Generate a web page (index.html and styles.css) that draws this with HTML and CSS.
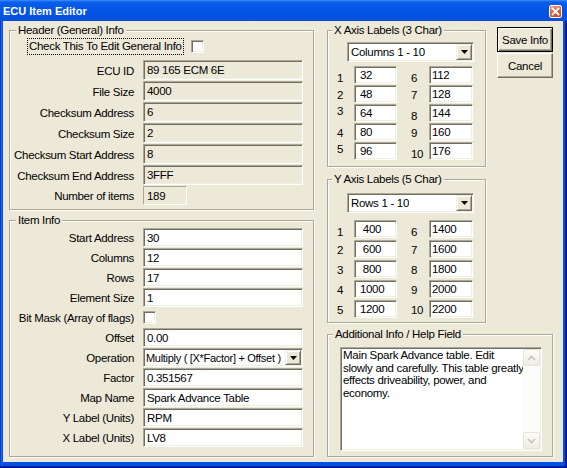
FILE: index.html
```html
<!DOCTYPE html>
<html>
<head>
<meta charset="utf-8">
<title>ECU Item Editor</title>
<link rel="stylesheet" href="styles.css">
</head>
<body>
<div class="window">
  <div class="titlebar">
    <span class="title">ECU Item Editor</span>
    <span class="close"><svg width="9" height="9" viewBox="0 0 9 9"><path d="M1.5 1.5L7.5 7.5M7.5 1.5L1.5 7.5" stroke="#fff" stroke-width="1.8" stroke-linecap="square"/></svg></span>
  </div>
  <div class="client">
    <div class="col-left">
      <fieldset class="group g-header">
        <legend>Header (General) Info</legend>
        <div class="check-row"><span class="focus">Check This To Edit General Info</span><span class="checkbox"></span></div>
        <div class="form form-header">
          <label>ECU ID</label><div class="field ro">89 165 ECM 6E</div>
          <label>File Size</label><div class="field ro">4000</div>
          <label>Checksum Address</label><div class="field ro">6</div>
          <label>Checksum Size</label><div class="field ro">2</div>
          <label>Checksum Start Address</label><div class="field ro">8</div>
          <label>Checksum End Address</label><div class="field ro">3FFF</div>
          <label>Number of items</label><div class="count">189</div>
        </div>
      </fieldset>
      <fieldset class="group g-item">
        <legend>Item Info</legend>
        <div class="form form-item">
          <label>Start Address</label><div class="field">30</div>
          <label>Columns</label><div class="field">12</div>
          <label>Rows</label><div class="field">17</div>
          <label>Element Size</label><div class="field">1</div>
          <label>Bit Mask (Array of flags)</label><div class="cb-cell"><span class="checkbox"></span></div>
          <label>Offset</label><div class="field">0.00</div>
          <label>Operation</label><div class="combo"><span class="combo-text op-text">Multiply ( [X*Factor] + Offset )</span><span class="drop"><svg width="7" height="4" viewBox="0 0 7 4"><path d="M0 0H7L3.5 4Z" fill="#000"/></svg></span></div>
          <label>Factor</label><div class="field">0.351567</div>
          <label>Map Name</label><div class="field">Spark Advance Table</div>
          <label>Y Label (Units)</label><div class="field">RPM</div>
          <label>X Label (Units)</label><div class="field">LV8</div>
        </div>
      </fieldset>
    </div>
    <div class="col-right">
      <div class="top">
        <div class="axes">
          <fieldset class="group g-x">
            <legend>X Axis Labels (3 Char)</legend>
            <div class="combo axis-combo"><span class="combo-text">Columns 1 - 10</span><span class="drop"><svg width="7" height="4" viewBox="0 0 7 4"><path d="M0 0H7L3.5 4Z" fill="#000"/></svg></span></div>
            <div class="nums nums-x">
              <span class="n e">1</span><div class="box">&nbsp;32</div><span class="n n2 e">6</span><div class="box">112</div>
              <span class="n c">2</span><div class="box">&nbsp;48</div><span class="n n2 c">7</span><div class="box">128</div>
              <span class="n s">3</span><div class="box">&nbsp;64</div><span class="n n2 e">8</span><div class="box">144</div>
              <span class="n c">4</span><div class="box">&nbsp;80</div><span class="n n2 c">9</span><div class="box">160</div>
              <span class="n s">5</span><div class="box">&nbsp;96</div><span class="n n2 e">10</span><div class="box">176</div>
            </div>
          </fieldset>
          <fieldset class="group g-y">
            <legend>Y Axis Labels (5 Char)</legend>
            <div class="combo axis-combo"><span class="combo-text">Rows 1 - 10</span><span class="drop"><svg width="7" height="4" viewBox="0 0 7 4"><path d="M0 0H7L3.5 4Z" fill="#000"/></svg></span></div>
            <div class="nums nums-y">
              <span class="n e">1</span><div class="box">&nbsp;&nbsp;400</div><span class="n n2 e">6</span><div class="box">1400</div>
              <span class="n c">2</span><div class="box">&nbsp;&nbsp;600</div><span class="n n2 c">7</span><div class="box">1600</div>
              <span class="n c">3</span><div class="box">&nbsp;&nbsp;800</div><span class="n n2 c">8</span><div class="box">1800</div>
              <span class="n c">4</span><div class="box">&nbsp;1000</div><span class="n n2 c">9</span><div class="box">2000</div>
              <span class="n c">5</span><div class="box">&nbsp;1200</div><span class="n n2 c">10</span><div class="box">2200</div>
            </div>
          </fieldset>
        </div>
        <div class="buttons">
          <div class="btn default">Save Info</div>
          <div class="btn">Cancel</div>
        </div>
      </div>
      <fieldset class="group g-add">
        <legend>Additional Info / Help Field</legend>
        <div class="memo">
          <div class="memo-text">Main Spark Advance table. Edit<br>slowly and carefully. This table greatly<br>effects driveability, power, and<br>economy.</div>
          <div class="vscroll">
            <span class="sb"><svg width="9" height="6" viewBox="0 0 9 6"><path d="M1 5L4.5 1.5L8 5" fill="none" stroke="#c4c3b8" stroke-width="1.6"/></svg></span>
            <span class="track"></span>
            <span class="sb"><svg width="9" height="6" viewBox="0 0 9 6"><path d="M1 1L4.5 4.5L8 1" fill="none" stroke="#c4c3b8" stroke-width="1.6"/></svg></span>
          </div>
        </div>
      </fieldset>
    </div>
  </div>
</div>
</body>
</html>
```
FILE: styles.css
```css
* { box-sizing: border-box; }
html, body { margin: 0; padding: 0; }
body {
  width: 567px;
  height: 468px;
  overflow: hidden;
  font-family: "Liberation Sans", Arial, sans-serif;
  font-size: 11.5px;
  letter-spacing: -0.3px;
  color: #000;
  background: #ece9d8;
}
.window {
  width: 567px;
  height: 468px;
  display: flex;
  flex-direction: column;
  background: #0550e0;
  box-shadow: inset -1px -1px #00138c, inset 1px 0 #0831d9, inset -2px -2px #001ea0, inset 2px 0 #166aee;
}
.titlebar {
  height: 21px;
  flex: none;
  display: flex;
  align-items: center;
  justify-content: space-between;
  padding: 1px 5px 0 3px;
  background: linear-gradient(180deg, #3d8ff9 0, #0a5fea 2px, #0557e6 8px, #0253e2 16px, #0a4fd8 21px);
  color: #fff;
  font-weight: bold;
  font-size: 11px;
  letter-spacing: 0;
}
.close {
  width: 13px;
  height: 13px;
  display: flex;
  align-items: center;
  justify-content: center;
  border: 1px solid #fff;
  border-radius: 2px;
  background: linear-gradient(160deg, #f0a58c 0, #e2633f 45%, #c8401f 100%);
}
.client {
  flex: 1;
  margin: 0 4px 6px 3px;
  background: #ece9d8;
  display: flex;
  gap: 13px;
  padding: 2px 10px 5px 6px;
}
.col-left {
  width: 305px;
  display: flex;
  flex-direction: column;
  gap: 3px;
}
.col-right {
  width: 226px;
  display: flex;
  flex-direction: column;
}
.top { display: flex; gap: 11px; }
.axes {
  width: 159px;
  display: flex;
  flex-direction: column;
  gap: 5px;
}
.buttons {
  width: 56px;
  display: flex;
  flex-direction: column;
  gap: 1px;
  margin-top: 4px;
}

/* group boxes */
.group {
  margin: 0;
  padding: 0;
  min-width: 0;
  border: 1px solid #aca899;
  box-shadow: inset 1px 1px 0 #fff, 1px 1px 0 #fff;
}
.group legend {
  margin-left: 6px;
  padding: 0 2px;
  line-height: 14px;
  background: #ece9d8;
}
.g-x legend, .g-y legend { margin-left: 4px; }
.g-add legend { margin-left: 5px; }
.g-header { padding-bottom: 4px; }
.g-item { flex: 1; }
.g-x { padding: 0 0 6px 0; }
.g-y { padding: 0 0 4px 0; }
.g-add { flex: 1; margin-top: 4px; }

/* header check row */
.check-row {
  display: flex;
  align-items: center;
  gap: 7px;
  margin: 1px 0 0 17px;
  height: 17px;
}
.focus {
  outline: 1px dotted #000;
  outline-offset: -1px;
  height: 17px;
  line-height: 17px;
  padding: 0 2px 0 2px;
}
.checkbox {
  display: block;
  width: 13px;
  height: 13px;
  background: #fff;
  border: 1px solid;
  border-color: #aca899 #fff #fff #aca899;
  box-shadow: inset 1px 1px #716f64, inset -1px -1px #f1efe2;
}

/* label/field forms */
.form {
  display: grid;
  grid-template-columns: 124px 160px;
  column-gap: 9px;
}
.form label {
  text-align: right;
  align-self: center;
  white-space: nowrap;
  padding-top: 1px;
}
.form-header {
  margin-top: 5px;
  row-gap: 1px;
  grid-template-rows: repeat(6, 20px) 19px;
}
.form-item {
  margin-top: 1px;
  row-gap: 1px;
  grid-auto-rows: 19px;
}
.field {
  background: #fff;
  border: 1px solid;
  border-color: #aca899 #fff #fff #aca899;
  box-shadow: inset 1px 1px #716f64, inset -1px -1px #f1efe2;
  padding: 0 3px;
  display: flex;
  align-items: center;
  white-space: nowrap;
  overflow: hidden;
}
.field.ro { background: #ece9d8; }
.count {
  width: 44px;
  border: 1px solid;
  border-color: #aca899 #fff #fff #aca899;
  padding: 0 3px;
  display: flex;
  align-items: center;
}
.cb-cell { display: flex; align-items: center; }

/* combos */
.combo {
  background: #fff;
  border: 1px solid;
  border-color: #aca899 #fff #fff #aca899;
  box-shadow: inset 1px 1px #716f64, inset -1px -1px #f1efe2;
  padding: 1px;
  display: flex;
  align-items: stretch;
  justify-content: space-between;
  white-space: nowrap;
}
.combo-text {
  display: flex;
  align-items: center;
  padding-left: 2px;
  overflow: hidden;
}
.op-text {
  padding-left: 1px;
  font-size: 11px;
  letter-spacing: -0.3px;
}
.drop {
  width: 16px;
  flex: none;
  display: flex;
  align-items: center;
  justify-content: center;
  background: #ece9d8;
  border: 1px solid;
  border-color: #f1efe2 #716f64 #716f64 #f1efe2;
  box-shadow: inset 1px 1px #fff, inset -1px -1px #aca899;
}
.axis-combo {
  width: 127px;
  height: 20px;
  margin-left: 19px;
}
.g-x .axis-combo { margin-top: 5px; }
.g-y .axis-combo { margin-top: 7px; }

/* number grids */
.nums {
  display: grid;
  grid-template-columns: 17px 43px 32px 44px;
  margin-left: 9px;
}
.nums-x { margin-top: 4px; grid-auto-rows: 18px; row-gap: 1px; }
.nums-y { margin-top: 7px; grid-auto-rows: 18px; row-gap: 2px; }
.n { line-height: 12px; }
.n2 { padding-left: 14px; }
.n.s { align-self: start; padding-top: 1px; }
.n.c { align-self: center; padding-top: 2px; }
.n.e { align-self: end; }
.box {
  background: #fff;
  border: 1px solid;
  border-color: #aca899 #fff #fff #aca899;
  box-shadow: inset 1px 1px #716f64, inset -1px -1px #f1efe2;
  padding: 0 2px;
  display: flex;
  align-items: center;
  white-space: nowrap;
}

/* buttons */
.btn {
  height: 25px;
  display: flex;
  align-items: center;
  justify-content: center;
  background: #ece9d8;
  border: 1px solid;
  border-color: #fff #716f64 #716f64 #fff;
  box-shadow: inset -1px -1px #aca899, inset 1px 1px #f1efe2;
}
.btn.default {
  border-color: #000;
  box-shadow: inset 1px 1px #fff, inset -1px -1px #716f64, inset -2px -2px #aca899;
}

/* memo */
.memo {
  margin: 6px 0 0 12px;
  width: 202px;
  height: 104px;
  background: #fff;
  border: 1px solid;
  border-color: #aca899 #fff #fff #aca899;
  box-shadow: inset 1px 1px #716f64, inset -1px -1px #f1efe2;
  padding: 1px;
  display: flex;
}
.memo-text {
  flex: 1;
  padding: 0 0 0 1px;
  line-height: 12.5px;
  white-space: nowrap;
  overflow: hidden;
}
.vscroll {
  width: 17px;
  display: flex;
  flex-direction: column;
  background: #fcfcf9;
}
.sb {
  height: 17px;
  display: flex;
  align-items: center;
  justify-content: center;
  border: 1px solid #e6e4d8;
  border-radius: 2px;
  background: linear-gradient(180deg, #fbfbf8, #eeede5);
}
.track { flex: 1; }
```
